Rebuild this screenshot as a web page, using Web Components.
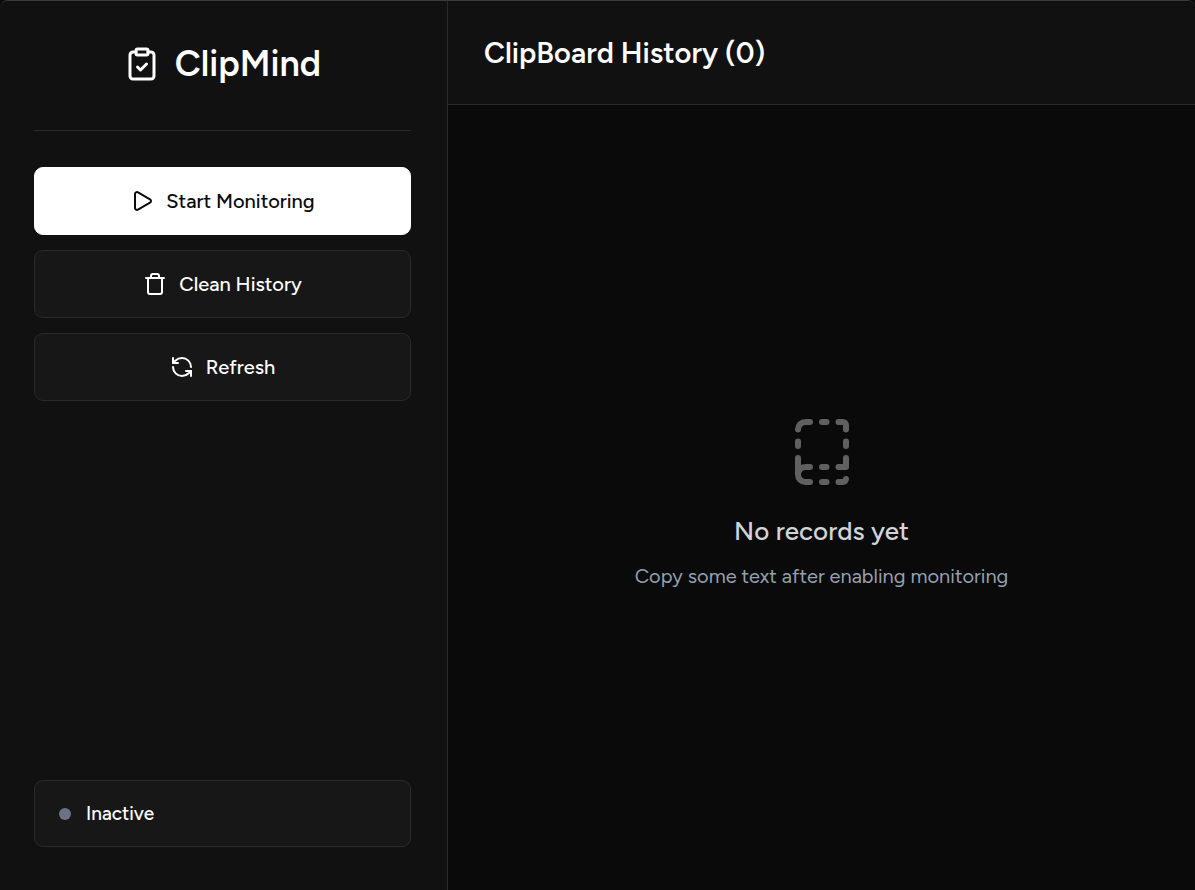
<!DOCTYPE html>
<html lang="en">
<head>
<meta charset="utf-8">
<title>ClipMind</title>
<style>
html, body { height: 100%; margin: 0; background: #0a0a0a; }
body { font-family: Figtree, Inter, "Open Sans", sans-serif; color: #fff; }
</style>
</head>
<body>
<clip-app></clip-app>
<script>
const ICONS = {
  clipboard: '<rect x="8" y="2" width="8" height="4" rx="1"/><path d="M16 4h2a2 2 0 0 1 2 2v14a2 2 0 0 1-2 2H6a2 2 0 0 1-2-2V6a2 2 0 0 1 2-2h2"/><path d="m9 14 2 2 4-4"/>',
  play: '<path d="M5 5a2 2 0 0 1 3.008-1.728l11.997 6.998a2 2 0 0 1 .003 3.458l-12 7A2 2 0 0 1 5 19z"/>',
  trash: '<path d="M19 6v14a2 2 0 0 1-2 2H7a2 2 0 0 1-2-2V6"/><path d="M3 6h18"/><path d="M8 6V4a2 2 0 0 1 2-2h4a2 2 0 0 1 2 2v2"/>',
  refresh: '<path d="M21 12a9 9 0 0 0-9-9 9.75 9.75 0 0 0-6.74 2.74L3 8"/><path d="M3 3v5h5"/><path d="M3 12a9 9 0 0 0 9 9 9.75 9.75 0 0 0 6.74-2.74L21 16"/><path d="M16 16h5v5"/>',
  book: '<path d="M12 17h1.5M12 22h1.5M12 2h1.5M17.5 22H19a1 1 0 0 0 1-1M17.5 2H19a1 1 0 0 1 1 1v1.5M20 14v3h-2.5M20 8.5V10M4 10V8.5M4 19.5V14M4 4.5A2.5 2.5 0 0 1 6.5 2H8M8 22H6.5a2.5 2.5 0 0 1-2.5-2.5A2.5 2.5 0 0 1 6.5 17H8"/>'
};

function define(name, render) {
  customElements.define(name, class extends HTMLElement {
    constructor() {
      super();
      this.attachShadow({ mode: 'open' });
    }
    connectedCallback() {
      this.shadowRoot.innerHTML = render(this);
    }
  });
}

define('clip-icon', el => `
  <style>
    :host { display: block; flex: none; width: var(--icon-size, 24px); height: var(--icon-size, 24px); }
    svg { display: block; width: 100%; height: 100%; }
  </style>
  <svg viewBox="0 0 24 24" fill="none" stroke="currentColor" stroke-width="2" stroke-linecap="round" stroke-linejoin="round" aria-hidden="true">${ICONS[el.getAttribute('name')]}</svg>`);

define('clip-brand', () => `
  <style>
    :host { display: flex; align-items: center; justify-content: center; gap: 15px; height: 129px; box-sizing: border-box; padding-bottom: 4px; border-bottom: 1px solid #2a2a2a; --icon-size: 36px; }
    h1 { margin: 0; font-size: 36px; line-height: 44px; font-weight: 600; }
  </style>
  <clip-icon name="clipboard"></clip-icon><h1><slot></slot></h1>`);

define('clip-button', el => `
  <style>
    :host { display: block; }
    button { display: flex; align-items: center; justify-content: center; gap: 12px; width: 100%; height: 68px; padding: 0; border: 1px solid #2a2a2a; border-radius: 9px; background: #171717; color: #fff; font: 500 20px/28px Figtree, Inter, "Open Sans", sans-serif; cursor: pointer; }
    :host([primary]) button { background: #fff; border-color: #fff; color: #0a0a0a; }
  </style>
  <button type="button"><clip-icon name="${el.getAttribute('icon')}"></clip-icon><span><slot></slot></span></button>`);

define('clip-status', () => `
  <style>
    :host { display: flex; align-items: center; gap: 15px; box-sizing: border-box; height: 67px; padding: 0 24px; border: 1px solid #2a2a2a; border-radius: 9px; background: #171717; font-size: 19px; line-height: 28px; font-weight: 500; }
    i { width: 12px; height: 12px; border-radius: 50%; background: #6d7186; }
  </style>
  <i></i><span><slot></slot></span>`);

define('clip-sidebar', () => `
  <style>
    :host { display: flex; flex-direction: column; flex: none; width: 448px; box-sizing: border-box; padding: 1px 36px 43px 34px; border-right: 1px solid #2a2a2a; background: #111; }
    nav { display: flex; flex-direction: column; gap: 15px; padding-top: 36px; }
    clip-status { margin-top: auto; }
  </style>
  <clip-brand>ClipMind</clip-brand>
  <nav aria-label="Actions">
    <clip-button icon="play" primary>Start Monitoring</clip-button>
    <clip-button icon="trash">Clean History</clip-button>
    <clip-button icon="refresh">Refresh</clip-button>
  </nav>
  <clip-status>Inactive</clip-status>`);

define('clip-empty', () => `
  <style>
    :host { display: flex; flex-direction: column; align-items: center; justify-content: center; flex: 1; padding-top: 10px; text-align: center; --icon-size: 72px; }
    clip-icon { color: #606060; }
    h3 { margin: 24px 0 12px; font-size: 26px; line-height: 38px; font-weight: 500; color: #d1d5db; }
    p { margin: 0; font-size: 20px; line-height: 28px; color: #94a0b0; }
  </style>
  <clip-icon name="book"></clip-icon>
  <h3>No records yet</h3>
  <p>Copy some text after enabling monitoring</p>`);

define('clip-history', () => `
  <style>
    :host { display: flex; flex-direction: column; flex: 1; min-width: 0; background: #0a0a0a; }
    header { padding: 30px 36px; border-bottom: 1px solid #2a2a2a; background: #111; }
    h2 { margin: 0; font-size: 29px; line-height: 43px; font-weight: 600; }
  </style>
  <header><h2><slot></slot></h2></header>
  <clip-empty></clip-empty>`);

define('clip-app', () => `
  <style>
    :host { display: flex; box-sizing: border-box; min-height: 100vh; border-top: 1px solid #3c3c3c; border-radius: 8px 8px 0 0; overflow: hidden; }
  </style>
  <clip-sidebar></clip-sidebar>
  <clip-history>ClipBoard History (0)</clip-history>`);
</script>
</body>
</html>
